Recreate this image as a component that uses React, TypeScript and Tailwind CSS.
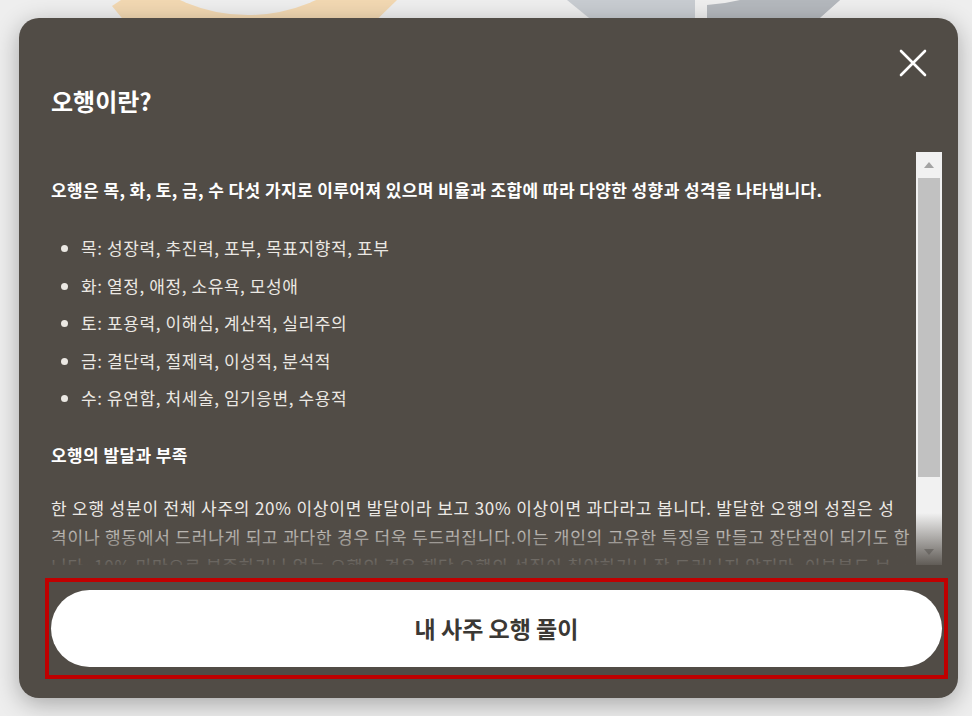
import React from "react";

const items = [
  "목: 성장력, 추진력, 포부, 목표지향적, 포부",
  "화: 열정, 애정, 소유욕, 모성애",
  "토: 포용력, 이해심, 계산적, 실리주의",
  "금: 결단력, 절제력, 이성적, 분석적",
  "수: 유연함, 처세술, 임기응변, 수용적",
];

function BackdropArt() {
  return (
    <svg
      className="absolute left-0 top-0"
      width="972"
      height="40"
      viewBox="0 0 972 40"
      aria-hidden
    >
      <polygon points="121,0 112,6 140,40 356,40 397,0" fill="#f2d8b2" />
      <circle cx="248" cy="-147" r="162" fill="#eeeeee" />
      <polygon points="567,0 616,40 795,40 840,0" fill="#c8ccd1" />
      <polygon points="701,0 840,0 795,40 701,40" fill="#b4b8bd" />
      <rect x="695" y="0" width="12" height="40" fill="#eeeeee" />
      <path d="M707,0 L707,5 Q724,4 740,0 Z" fill="#eeeeee" />
    </svg>
  );
}

function FakeScrollbar() {
  return (
    <div className="flex w-[26px] shrink-0 flex-col bg-[#f1f1f1]">
      <div className="flex h-[26px] items-center justify-center">
        <svg width="12" height="8" viewBox="0 0 12 8">
          <path d="M6 1 L11 7 L1 7 Z" fill="#a3a3a3" />
        </svg>
      </div>
      <div className="mx-[2px] h-[299px] bg-[#c1c1c1]" />
      <div className="flex-1" />
      <div className="flex h-[26px] items-center justify-center">
        <svg width="12" height="8" viewBox="0 0 12 8">
          <path d="M1 1 L11 1 L6 7 Z" fill="#a3a3a3" />
        </svg>
      </div>
    </div>
  );
}

export default function App() {
  return (
    <div
      className="relative h-[716px] w-[972px] overflow-hidden bg-[#eeeeee]"
      style={{ fontFamily: '"Noto Sans CJK KR", "Noto Sans", sans-serif' }}
    >
      <BackdropArt />

      <div className="relative z-10 px-[19px] pt-[18px]">
        <div className="relative flex h-[680px] w-[939px] flex-col rounded-[20px] bg-[#514c46] pb-[19px] pl-[32px] pr-[16px] pt-[68px] shadow-[0_6px_24px_rgba(0,0,0,0.3)]">
          <button className="absolute right-[30px] top-[30px] flex h-[30px] w-[30px] items-center justify-center">
            <svg width="28" height="28" viewBox="0 0 28 28">
              <path
                d="M2 2 L26 26 M26 2 L2 26"
                stroke="#ffffff"
                strokeWidth="2.6"
                strokeLinecap="round"
              />
            </svg>
          </button>

          <h2 className="text-[24px] font-bold leading-[30px] text-white">
            오행이란?
          </h2>

          <div className="relative mt-[36px] flex h-[413px] overflow-hidden">
            <div className="flex-1 overflow-hidden pr-[12px] text-[17px] tracking-[0.4px]">
              <p className="mt-[26px] font-bold leading-[24px] text-white">
                오행은 목, 화, 토, 금, 수 다섯 가지로 이루어져 있으며 비율과 조합에 따라 다양한 성향과 성격을 나타냅니다.
              </p>
              <ul className="mt-[27px] list-disc pl-[30px] leading-[37.5px] tracking-[0.6px] text-[#ebe8e3] marker:text-[#ebe8e3]">
                {items.map((t) => (
                  <li key={t}>{t}</li>
                ))}
              </ul>
              <p className="mt-[26px] font-bold leading-[24px] text-white">
                오행의 발달과 부족
              </p>
              <p className="-mr-[12px] mt-[26px] leading-[29px] tracking-[0.8px] text-[#edeae6]">
                한 오행 성분이 전체 사주의 20% 이상이면 발달이라 보고 30% 이상이면 과다라고 봅니다. 발달한 오행의 성질은 성
                <br />
                격이나 행동에서 드러나게 되고 과다한 경우 더욱 두드러집니다.이는 개인의 고유한 특징을 만들고 장단점이 되기도 합
                <br />
                니다. 10% 미만으로 부족하거나 없는 오행의 경우 해당 오행의 성질이 취약하거나 잘 드러나지 않지만, 이부분도 보
                <br />
                완하면 균형을 이룰 수 있습니다.
              </p>
            </div>
            <FakeScrollbar />
            <div className="pointer-events-none absolute bottom-0 left-0 right-0 h-[52px] bg-linear-to-b from-[#514c46]/0 to-[#514c46]/90" />
          </div>

          <div className="-ml-[6px] -mr-[6px] mt-[13px] border-[4px] border-[#c00000] px-[2px] py-[8px]">
            <button className="flex h-[77px] w-full items-center justify-center rounded-full bg-white text-[23px] font-bold text-[#3b3834]">
              내 사주 오행 풀이
            </button>
          </div>
        </div>
      </div>
    </div>
  );
}
